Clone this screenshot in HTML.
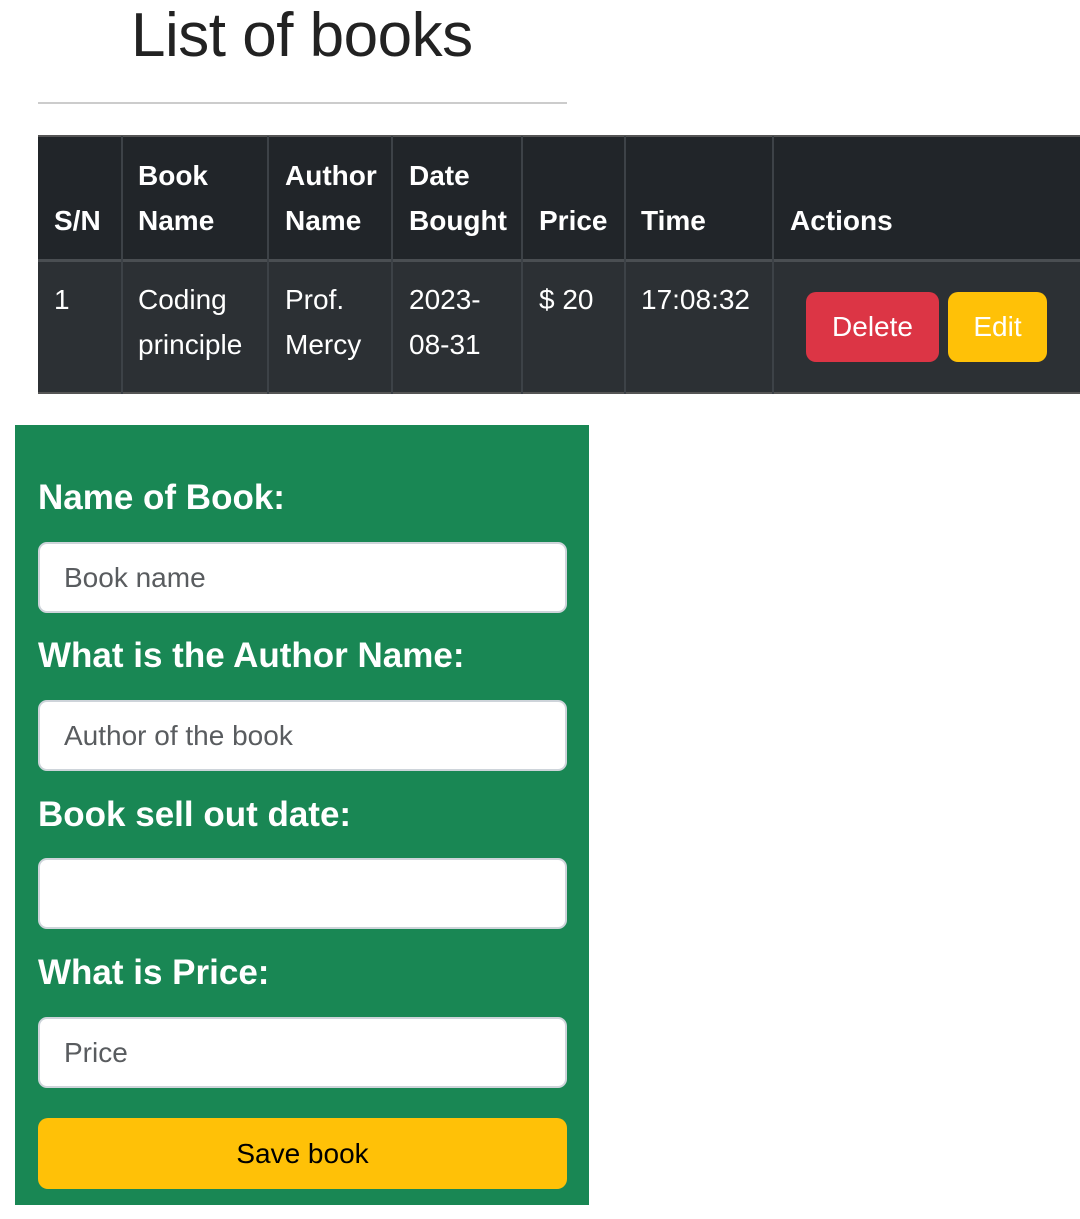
<!DOCTYPE html>
<html><head><meta charset="utf-8"><style>
*{margin:0;padding:0;box-sizing:border-box}
body{width:1080px;height:1219px;background:#fff;position:relative;overflow:hidden;font-family:"Liberation Sans",sans-serif}
.a{position:absolute;white-space:nowrap}
.t{font-size:28px;line-height:45px;color:#fff;letter-spacing:0}
.h{font-weight:bold}
.v{position:absolute;top:136px;height:258px;width:2px;background:#3d4247}
.lbl{position:absolute;left:38px;font-size:35px;font-weight:bold;color:#fff;letter-spacing:0}
.inp{position:absolute;left:38px;width:529px;height:71px;background:#fff;border:2px solid #ced4da;border-radius:9px;font-size:28px;color:#595c5f;padding-left:24px;line-height:67px}
</style></head><body>
<div class="a" style="left:131px;top:0px;font-size:62px;font-weight:300;color:#222;letter-spacing:-0.5px;line-height:72px">List of books</div>
<div class="a" style="left:38px;top:102px;width:529px;height:2px;background:#ccc"></div>

<div class="a" style="left:38px;top:135px;width:1042px;height:125px;background:#212529;border-top:2px solid #555"></div>
<div class="a" style="left:38px;top:259px;width:1042px;height:3px;background:#4a4e52"></div>
<div class="a" style="left:38px;top:262px;width:1042px;height:132px;background:#2c3034;border-bottom:2px solid #555"></div>
<div class="v" style="left:121px"></div>
<div class="v" style="left:267px"></div>
<div class="v" style="left:391px"></div>
<div class="v" style="left:521px"></div>
<div class="v" style="left:624px"></div>
<div class="v" style="left:772px"></div>

<div class="a t h" style="left:54px;top:198px">S/N</div>
<div class="a t h" style="left:138px;top:153px">Book<br>Name</div>
<div class="a t h" style="left:285px;top:153px">Author<br>Name</div>
<div class="a t h" style="left:409px;top:153px">Date<br>Bought</div>
<div class="a t h" style="left:539px;top:198px">Price</div>
<div class="a t h" style="left:641px;top:198px">Time</div>
<div class="a t h" style="left:790px;top:198px">Actions</div>

<div class="a t" style="left:54px;top:277px">1</div>
<div class="a t" style="left:138px;top:277px">Coding<br>principle</div>
<div class="a t" style="left:285px;top:277px">Prof.<br>Mercy</div>
<div class="a t" style="left:409px;top:277px">2023-<br>08-31</div>
<div class="a t" style="left:539px;top:277px">$ 20</div>
<div class="a t" style="left:641px;top:277px">17:08:32</div>
<div class="a" style="left:806px;top:292px;width:133px;height:70px;background:#dc3545;border-radius:10px;color:#fff;font-size:28px;line-height:70px;text-align:center">Delete</div>
<div class="a" style="left:948px;top:292px;width:99px;height:70px;background:#ffc107;border-radius:10px;color:#fff;font-size:28px;line-height:70px;text-align:center">Edit</div>

<div class="a" style="left:15px;top:425px;width:574px;height:780px;background:#198754"></div>
<div class="lbl" style="top:478px">Name of Book:</div>
<div class="inp" style="top:542px">Book name</div>
<div class="lbl" style="top:636px">What is the Author Name:</div>
<div class="inp" style="top:700px">Author of the book</div>
<div class="lbl" style="top:795px">Book sell out date:</div>
<div class="inp" style="top:858px"></div>
<div class="lbl" style="top:953px">What is Price:</div>
<div class="inp" style="top:1017px">Price</div>
<div class="a" style="left:38px;top:1118px;width:529px;height:71px;background:#ffc107;border-radius:10px;font-size:28px;line-height:71px;text-align:center;color:#000">Save book</div>
</body></html>
